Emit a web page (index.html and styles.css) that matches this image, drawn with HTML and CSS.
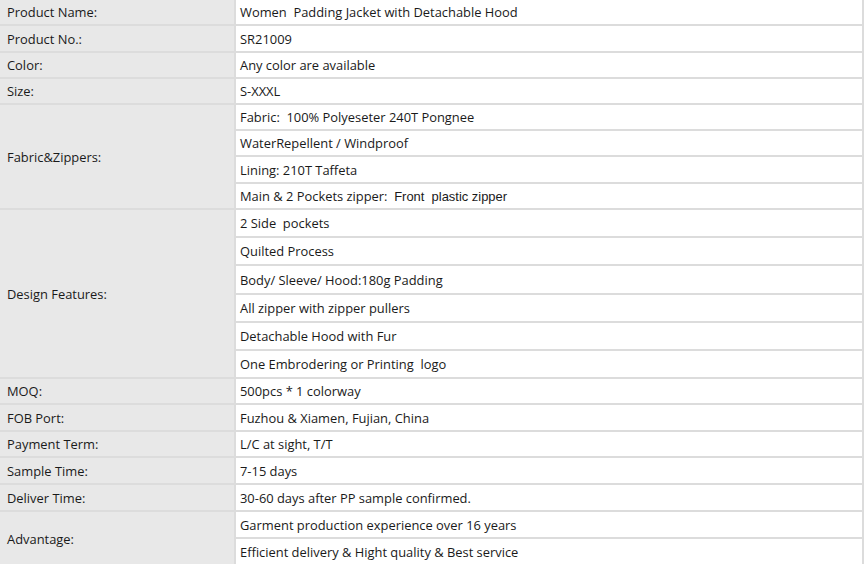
FILE: index.html
```html
<!DOCTYPE html>
<html>
<head>
<meta charset="utf-8">
<link rel="stylesheet" href="styles.css">
</head>
<body>
<div class="spec">
  <div class="label r1">Product Name:</div><div class="val">Women&nbsp; Padding Jacket with Detachable Hood</div>
  <div class="label">Product No.:</div><div class="val">SR21009</div>
  <div class="label">Color:</div><div class="val">Any color are available</div>
  <div class="label">Size:</div><div class="val">S-XXXL</div>
  <div class="label span4">Fabric&amp;Zippers:</div><div class="val">Fabric:&nbsp; 100% Polyeseter 240T Pongnee</div>
  <div class="val">WaterRepellent / Windproof</div>
  <div class="val">Lining: 210T Taffeta</div>
  <div class="val">Main &amp; 2 Pockets zipper:&nbsp; <span class="alt">Front&nbsp; plastic zipper</span></div>
  <div class="label span6">Design Features:</div><div class="val">2 Side&nbsp; pockets</div>
  <div class="val">Quilted Process</div>
  <div class="val">Body/ Sleeve/ Hood:180g Padding</div>
  <div class="val">All zipper with zipper pullers</div>
  <div class="val">Detachable Hood with Fur</div>
  <div class="val">One Embrodering or Printing&nbsp; logo</div>
  <div class="label">MOQ:</div><div class="val">500pcs * 1 colorway</div>
  <div class="label">FOB Port:</div><div class="val">Fuzhou &amp; Xiamen, Fujian, China</div>
  <div class="label">Payment Term:</div><div class="val">L/C at sight, T/T</div>
  <div class="label">Sample Time:</div><div class="val">7-15 days</div>
  <div class="label">Deliver Time:</div><div class="val">30-60 days after PP sample confirmed.</div>
  <div class="label span2">Advantage:</div><div class="val">Garment production experience over 16 years</div>
  <div class="val">Efficient delivery &amp; Hight quality &amp; Best service</div>
</div>
</body>
</html>
```
FILE: styles.css
```css
html, body {
  margin: 0;
  padding: 0;
  background: #ffffff;
}
.spec {
  width: 862px;
  height: 564px;
  overflow: hidden;
  padding-right: 2px;
  background: #dcdcdc;
  display: grid;
  grid-template-columns: 234px 626px;
  grid-template-rows: 24px 25px 24px 24px 24px 24px 25px 24px 26px 26px 27px 26px 26px 26px 24px 25px 24px 25px 25px 25px 26px;
  column-gap: 2px;
  row-gap: 2px;
  font-family: "Open Sans", "Noto Sans", sans-serif;
  font-size: 12.9px;
  color: #1a1a1a;
}
.label {
  background: #e8e8e8;
  display: flex;
  align-items: center;
  padding-left: 7px;
}
.val {
  background: #ffffff;
  display: flex;
  align-items: center;
  padding-left: 4px;
  white-space: pre;
}
.alt {
  font-family: "Liberation Sans", Arial, sans-serif;
  font-size: 12.95px;
}
.span4 { grid-row: span 4; }
.span6 { grid-row: span 6; }
.span2 { grid-row: span 2; }
```
